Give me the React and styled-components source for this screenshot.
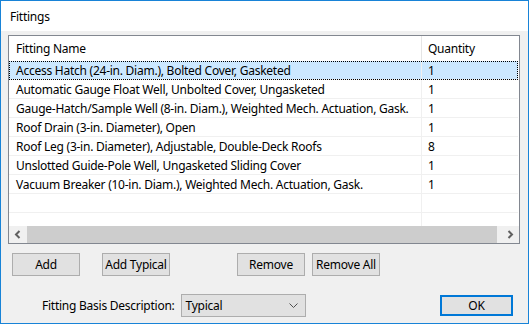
import React from "react";
import styled, { createGlobalStyle } from "styled-components";

const GlobalStyle = createGlobalStyle`
  html, body { margin: 0; padding: 0; background: #ffffff; }
  body {
    font-family: "Noto Sans", "Liberation Sans", sans-serif;
    font-size: 12px;
    letter-spacing: -0.25px;
    color: #000;
  }
  * { box-sizing: border-box; }
`;

const Window = styled.div`
  width: 529px;
  height: 324px;
  border: 1px solid #1883d7;
  background: #f0f0f0;
  display: flex;
  flex-direction: column;
`;

const TitleBar = styled.div`
  height: 30px;
  background: #ffffff;
  display: flex;
  align-items: center;
  padding-left: 9px;
  font-size: 12px;
`;

const Client = styled.div`
  flex: 1;
  display: flex;
  flex-direction: column;
  padding: 4px 8px 0 7px;
`;

const ListView = styled.div`
  height: 209px;
  border: 1px solid #828790;
  background: #ffffff;
  display: flex;
  flex-direction: column;
`;

const Header = styled.div`
  height: 25px;
  display: grid;
  grid-template-columns: 413px 1fr;
  flex-shrink: 0;
`;

const HeaderCell = styled.div`
  display: flex;
  align-items: center;
  padding-left: ${(p) => (p.$first ? "7px" : "6px")};
  border-right: ${(p) => (p.$first ? "1px solid #e5e5e5" : "none")};
  white-space: nowrap;
`;

const Rows = styled.div`
  flex: 1;
  overflow: hidden;
`;

const Row = styled.div`
  position: relative;
  height: 19px;
  display: grid;
  grid-template-columns: 413px 1fr;
  margin-right: 1px;
  border-bottom: 1px solid #f0f0f0;
  background: ${(p) => (p.$selected ? "#cce8ff" : "transparent")};
  ${(p) =>
    p.$selected &&
    `&::after {
      content: "";
      position: absolute;
      inset: 0 0 -1px 0;
      border: 1px dotted #000;
      pointer-events: none;
    }`}
`;

const Cell = styled.div`
  display: flex;
  align-items: center;
  padding-left: ${(p) => (p.$first ? "7px" : "6px")};
  border-right: ${(p) => (p.$first ? "1px solid #f0f0f0" : "none")};
  white-space: nowrap;
  overflow: hidden;
`;

const ScrollBar = styled.div`
  height: 17px;
  flex-shrink: 0;
  display: flex;
  background: #f0f0f0;
`;

const ScrollButton = styled.div`
  width: 18px;
  display: flex;
  align-items: center;
  justify-content: center;
`;

const Track = styled.div`
  flex: 1;
  display: flex;
  padding-right: 4px;
`;

const Thumb = styled.div`
  flex: 1;
  background: #cdcdcd;
`;

const ButtonRow = styled.div`
  display: flex;
  margin-top: 9px;
  padding-left: 4px;
`;

const ButtonGroup = styled.div`
  display: flex;
  gap: ${(p) => p.$gap}px;
  margin-left: ${(p) => p.$offset || 0}px;
`;

const Button = styled.div`
  width: ${(p) => p.$width || 68}px;
  height: ${(p) => p.$height || 23}px;
  background: #e1e1e1;
  border: ${(p) => (p.$default ? "2px solid #0078d7" : "1px solid #adadad")};
  display: flex;
  align-items: center;
  justify-content: center;
  white-space: nowrap;
`;

const BottomRow = styled.div`
  display: flex;
  align-items: center;
  margin-top: 18px;
`;

const Label = styled.div`
  margin-left: 34px;
  margin-right: 6px;
  white-space: nowrap;
`;

const Select = styled.div`
  width: 125px;
  height: 23px;
  background: #e1e1e1;
  border: 1px solid #adadad;
  display: flex;
  align-items: center;
  justify-content: space-between;
  padding: 0 7px 0 4px;
`;

const OkWrap = styled.div`
  margin-left: auto;
  margin-right: 7px;
`;

const Chevron = ({ dir }) => (
  <svg width="8" height="9" viewBox="0 0 8 9">
    {dir === "left" ? (
      <polyline points="5.5,1 2,4.5 5.5,8" fill="none" stroke="#606060" strokeWidth="2" />
    ) : (
      <polyline points="2.5,1 6,4.5 2.5,8" fill="none" stroke="#606060" strokeWidth="2" />
    )}
  </svg>
);

const DownChevron = () => (
  <svg width="9" height="5" viewBox="0 0 9 5">
    <polyline points="0.5,0.5 4.5,4.5 8.5,0.5" fill="none" stroke="#505050" strokeWidth="1" />
  </svg>
);

const fittings = [
  ["Access Hatch (24-in. Diam.), Bolted Cover, Gasketed", "1"],
  ["Automatic Gauge Float Well, Unbolted Cover, Ungasketed", "1"],
  ["Gauge-Hatch/Sample Well (8-in. Diam.), Weighted Mech. Actuation, Gask.", "1"],
  ["Roof Drain (3-in. Diameter), Open", "1"],
  ["Roof Leg (3-in. Diameter), Adjustable, Double-Deck Roofs", "8"],
  ["Unslotted Guide-Pole Well, Ungasketed Sliding Cover", "1"],
  ["Vacuum Breaker (10-in. Diam.), Weighted Mech. Actuation, Gask.", "1"],
  ["", ""],
  ["", ""],
  ["", ""],
];

export default function App() {
  return (
    <>
      <GlobalStyle />
      <Window>
        <TitleBar>Fittings</TitleBar>
        <Client>
          <ListView>
            <Header>
              <HeaderCell $first>Fitting Name</HeaderCell>
              <HeaderCell>Quantity</HeaderCell>
            </Header>
            <Rows>
              {fittings.map(([name, qty], i) => (
                <Row key={i} $selected={i === 0}>
                  <Cell $first>{name}</Cell>
                  <Cell>{qty}</Cell>
                </Row>
              ))}
            </Rows>
            <ScrollBar>
              <ScrollButton>
                <Chevron dir="left" />
              </ScrollButton>
              <Track>
                <Thumb />
              </Track>
              <ScrollButton>
                <Chevron dir="right" />
              </ScrollButton>
            </ScrollBar>
          </ListView>
          <ButtonRow>
            <ButtonGroup $gap={22}>
              <Button>Add</Button>
              <Button>Add Typical</Button>
            </ButtonGroup>
            <ButtonGroup $gap={7} $offset={67}>
              <Button>Remove</Button>
              <Button>Remove All</Button>
            </ButtonGroup>
          </ButtonRow>
          <BottomRow>
            <Label>Fitting Basis Description:</Label>
            <Select>
              <span>Typical</span>
              <DownChevron />
            </Select>
            <OkWrap>
              <Button $default $width={73} $height={21}>OK</Button>
            </OkWrap>
          </BottomRow>
        </Client>
      </Window>
    </>
  );
}
